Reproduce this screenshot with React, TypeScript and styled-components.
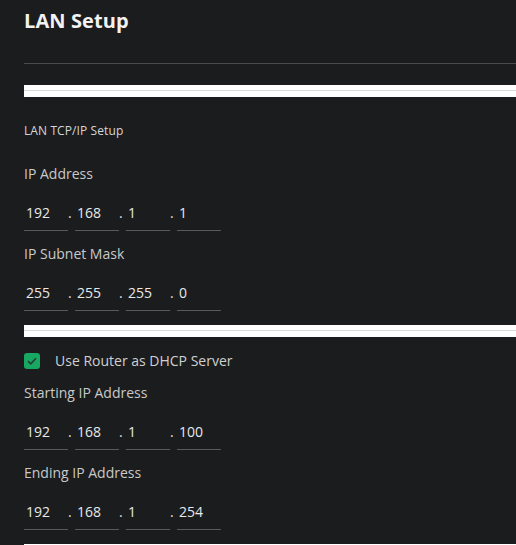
import React from 'react';
import styled, { createGlobalStyle } from 'styled-components';

const GlobalStyle = createGlobalStyle`
	html, body {
		margin: 0;
		padding: 0;
		background-color: #1b1c1e;
	}
	body {
		font-family: 'Open Sans', 'Noto Sans', Arial, sans-serif;
		color: #d0d0d0;
	}
`;

const Page = styled.main`
	padding-left: 24px;
	min-height: 545px;
	background-color: #1b1c1e;
`;

const Header = styled.header`
	padding: 7px 0 28px;
	border-bottom: 1px solid #4a4a4a;
`;

const Title = styled.h1`
	margin: 0;
	font-size: 20px;
	line-height: 28px;
	font-weight: 700;
	letter-spacing: 0.1px;
	color: #f2f2f2;
`;

const Divider = styled.div<{ $gap: number }>`
	margin-top: ${(p) => p.$gap}px;
	height: 1px;
	background-color: #d5dbdb;
	border-top: 5px solid #ffffff;
	border-bottom: 6px solid #ffffff;
`;

const SectionTitle = styled.h2`
	margin: 26px 0 0;
	font-size: 12px;
	line-height: 16px;
	font-weight: 400;
	letter-spacing: 0.1px;
	color: #d6d6d6;
`;

const FieldGroup = styled.div<{ $gap: number }>`
	margin-top: ${(p) => p.$gap}px;
`;

const Label = styled.label`
	display: block;
	font-size: 14px;
	line-height: 20px;
	color: #c9c9c9;
`;

const IpRow = styled.div`
	display: flex;
	align-items: baseline;
	margin-top: 16px;
`;

const Octet = styled.input`
	box-sizing: border-box;
	width: 44px;
	height: 31px;
	padding: 0 2px 5px;
	border: none;
	border-bottom: 1px solid #5a5a5a;
	background: transparent;
	color: #e8e8e8;
	font-family: inherit;
	font-size: 14px;
	outline: none;
`;

const Dot = styled.span`
	width: 7px;
	font-size: 14px;
	color: #e0e0e0;
`;

const CheckRow = styled.label`
	display: flex;
	align-items: center;
	gap: 15px;
	margin-top: 14px;
	font-size: 14px;
	line-height: 20px;
	color: #d0d0d0;
`;

const CheckBox = styled.span`
	display: inline-flex;
	align-items: center;
	justify-content: center;
	width: 16px;
	height: 16px;
	border-radius: 3px;
	background-color: #17a862;
`;

const IpField = ({
	label,
	octets,
	gap,
}: {
	label: string;
	octets: string[];
	gap: number;
}) => (
	<FieldGroup $gap={gap}>
		<Label>{label}</Label>
		<IpRow>
			{octets.map((o, i) => (
				<React.Fragment key={i}>
					{i > 0 && <Dot>.</Dot>}
					<Octet defaultValue={o} aria-label={`${label} octet ${i + 1}`} />
				</React.Fragment>
			))}
		</IpRow>
	</FieldGroup>
);

export default function App() {
	return (
		<>
			<GlobalStyle />
			<Page>
				<Header>
					<Title>LAN Setup</Title>
				</Header>
				<Divider $gap={21} />
				<SectionTitle>LAN TCP/IP Setup</SectionTitle>
				<IpField label="IP Address" octets={['192', '168', '1', '1']} gap={25} />
				<IpField label="IP Subnet Mask" octets={['255', '255', '255', '0']} gap={13} />
				<Divider $gap={14} />
				<CheckRow>
					<CheckBox>
						<svg width="10" height="8" viewBox="0 0 10 8">
							<path d="M1 4.2 L3.8 6.8 L9 1.2" fill="none" stroke="#2a3b33" strokeWidth="1.6" />
						</svg>
					</CheckBox>
					Use Router as DHCP Server
				</CheckRow>
				<IpField label="Starting IP Address" octets={['192', '168', '1', '100']} gap={12} />
				<IpField label="Ending IP Address" octets={['192', '168', '1', '254']} gap={13} />
				<Divider $gap={14} />
			</Page>
		</>
	);
}
